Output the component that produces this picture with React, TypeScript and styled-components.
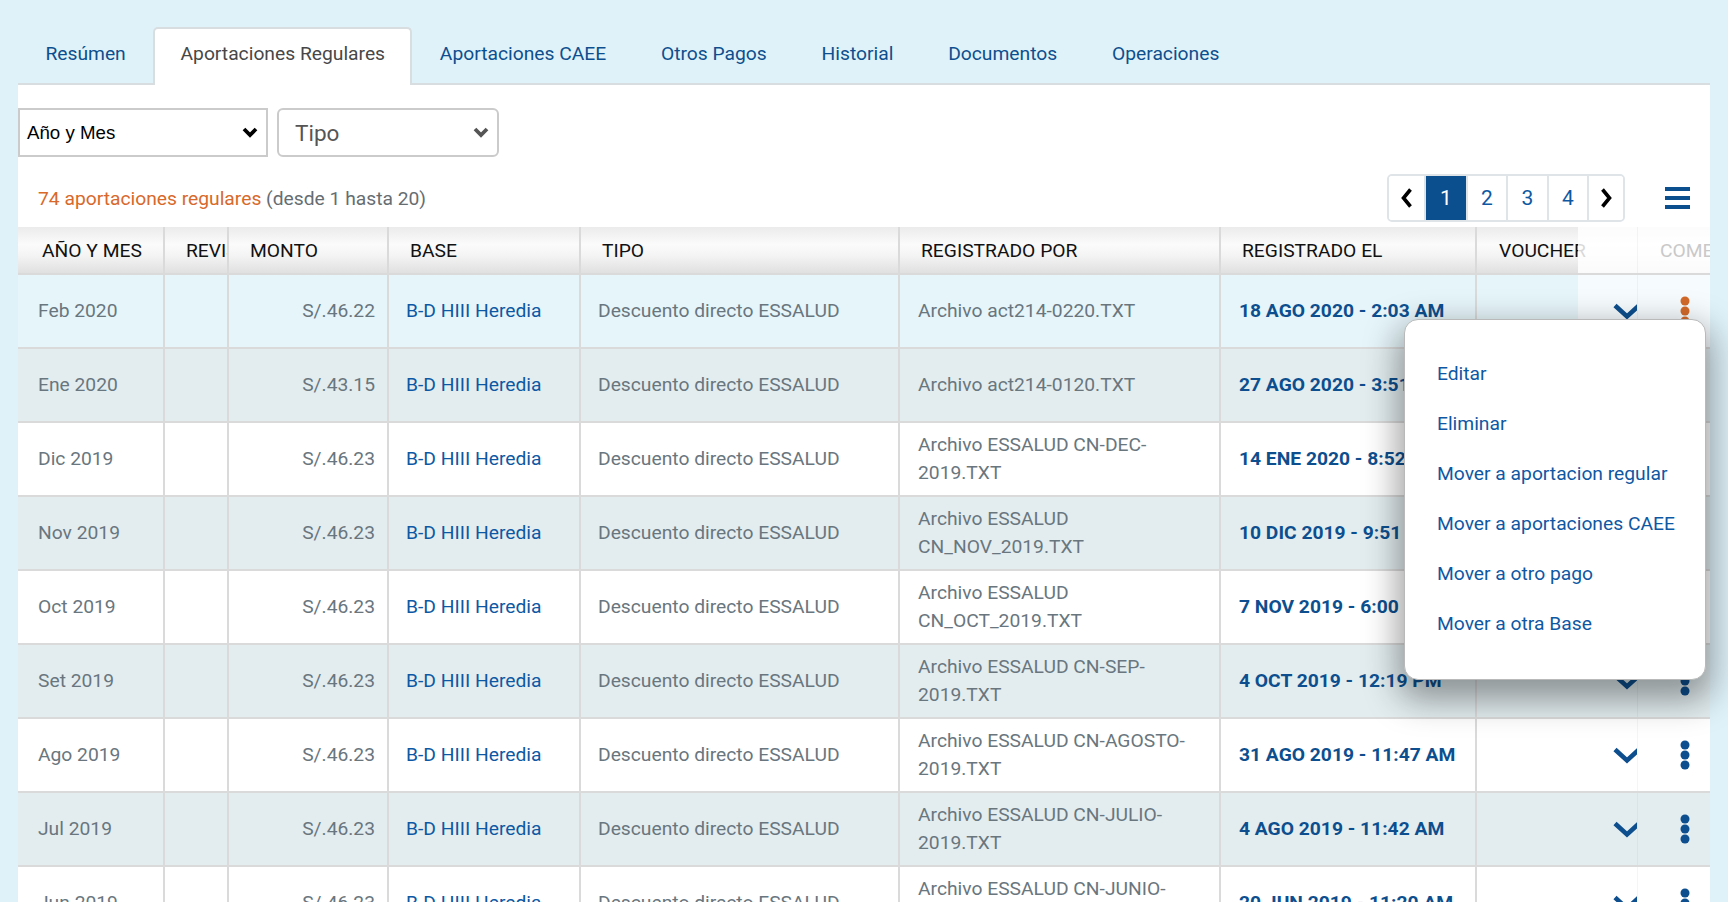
import React from "react";
import styled, { createGlobalStyle } from "styled-components";

const GlobalStyle = createGlobalStyle`
  html, body { margin: 0; padding: 0; }
  body {
    background: #dff2f9;
    font-family: Roboto, "Noto Sans", Arial, sans-serif;
    width: 1728px;
    height: 902px;
    overflow: hidden;
  }
  * { box-sizing: border-box; }
`;

const COLS = "147px 64px 160px 192px 319px 321px 256px 101px 59px 73px";
const BLUE = "#0d4f8e";
const LINK = "#0e58a3";
const GRAY = "#69767e";
const LINE = "#dadada";

const Page = styled.div`
  padding: 27px 18px 0 18px;
  height: 902px;
  overflow: hidden;
`;

const TabBar = styled.nav`
  display: flex;
  border-bottom: 2px solid #d8dde0;
`;

const Tab = styled.div<{ $active?: boolean }>`
  height: 58px;
  padding: 0 25.4px 8px 25.4px;
  display: flex;
  align-items: center;
  font-size: 19.25px;
  color: ${(p) => (p.$active ? "#474747" : BLUE)};
  background: ${(p) => (p.$active ? "#ffffff" : "transparent")};
  border: 2px solid ${(p) => (p.$active ? "#d8dde0" : "transparent")};
  border-bottom: none;
  border-radius: 5px 5px 0 0;
  margin-bottom: -2px;
`;

const Panel = styled.section`
  background: #ffffff;
`;

const FilterRow = styled.div`
  display: flex;
  gap: 9px;
  padding-top: 23px;
`;

const SelectBox = styled.div<{ $width: number; $rounded?: boolean }>`
  width: ${(p) => p.$width}px;
  height: 49px;
  border: 2px solid #cbcbcb;
  border-radius: ${(p) => (p.$rounded ? "6px" : "0")};
  display: flex;
  align-items: center;
  justify-content: space-between;
`;

const SelectLabel = styled.span<{ $variant: "sys" | "big" }>`
  font-family: ${(p) =>
    p.$variant === "sys" ? '"Liberation Sans", Arial, sans-serif' : 'Roboto, sans-serif'};
  font-size: ${(p) => (p.$variant === "sys" ? "18.7px" : "22.5px")};
  color: ${(p) => (p.$variant === "sys" ? "#000" : "#555")};
  padding-left: ${(p) => (p.$variant === "sys" ? "7px" : "16px")};
`;

const SelectArrow = styled.span`
  display: flex;
  padding-right: 8px;
`;

const Toolbar = styled.div`
  display: flex;
  align-items: center;
  justify-content: space-between;
  margin-top: 17px;
  margin-bottom: 5px;
  height: 48px;
  padding: 0 20px;
`;

const Count = styled.div`
  font-size: 19.25px;
  color: #666d72;
`;

const CountStrong = styled.span`
  color: #d8692b;
`;

const ToolRight = styled.div`
  display: flex;
  align-items: center;
  gap: 40px;
`;

const Pager = styled.div`
  display: flex;
  height: 48px;
  border: 2px solid #dfe4e8;
  border-radius: 5px;
  overflow: hidden;
`;

const PageItem = styled.div<{ $active?: boolean; $w: number; $last?: boolean }>`
  width: ${(p) => p.$w}px;
  display: flex;
  align-items: center;
  justify-content: center;
  font-size: 21px;
  color: ${(p) => (p.$active ? "#ffffff" : LINK)};
  background: ${(p) => (p.$active ? "#0b4f8f" : "#ffffff")};
  border-right: ${(p) => (p.$last ? "none" : "2px solid #dfe4e8")};
`;

const Burger = styled.div`
  display: flex;
  width: 25px;
`;

const TableWrap = styled.div`
  position: relative;
`;

const HeadRow = styled.div`
  display: grid;
  grid-template-columns: ${COLS};
  height: 48px;
  background: linear-gradient(#ebebeb 0%, #fbfbfb 38%, #f4f4f4 62%, #e0e0e0 100%);
  border-bottom: 2px solid ${LINE};
`;

const HeadCell = styled.div<{ $divider?: boolean; $pad?: number; $visible?: boolean }>`
  display: flex;
  align-items: center;
  padding-left: ${(p) => p.$pad ?? 21}px;
  font-size: 19.25px;
  color: #111;
  white-space: nowrap;
  overflow: ${(p) => (p.$visible ? "visible" : "hidden")};
  border-right: ${(p) => (p.$divider ? `2px solid ${LINE}` : "none")};
`;

const StickyHead = styled.div<{ $edge?: boolean }>`
  position: relative;
  z-index: 1;
  display: flex;
  align-items: center;
  padding-left: 22px;
  overflow: hidden;
  white-space: nowrap;
  font-size: 19.25px;
  color: #c9c9c9;
  background: rgba(255, 255, 255, 0.84);
  border-left: ${(p) => (p.$edge ? "1px solid rgba(0,0,0,0.04)" : "none")};
`;

const Row = styled.div<{ $bg: string }>`
  display: grid;
  grid-template-columns: ${COLS};
  height: 74px;
  background: ${(p) => p.$bg};
  border-bottom: 2px solid ${LINE};
`;

const Cell = styled.div<{
  $divider?: boolean;
  $right?: boolean;
  $pad?: number;
  $tone?: "gray" | "link" | "date";
}>`
  display: flex;
  flex-direction: column;
  justify-content: center;
  align-items: ${(p) => (p.$right ? "flex-end" : "flex-start")};
  padding: ${(p) => (p.$right ? "0 12px 0 0" : `0 0 0 ${p.$pad ?? 17}px`)};
  font-size: 19.25px;
  line-height: 28px;
  white-space: nowrap;
  overflow: hidden;
  font-weight: ${(p) => (p.$tone === "date" ? 700 : 400)};
  color: ${(p) => (p.$tone === "link" ? LINK : p.$tone === "date" ? BLUE : GRAY)};
  border-right: ${(p) => (p.$divider ? `2px solid ${LINE}` : "none")};
`;

const ActionCell = styled.div<{ $bg: string; $edge?: boolean; $end?: boolean }>`
  position: relative;
  z-index: 1;
  display: flex;
  align-items: center;
  justify-content: ${(p) => (p.$end ? "flex-end" : "flex-start")};
  padding-left: ${(p) => (p.$end ? "0" : "42px")};
  background: ${(p) => p.$bg};
  border-left: ${(p) => (p.$edge ? "1px solid rgba(0,0,0,0.04)" : "none")};
`;

const ChevronWrap = styled.span`
  display: flex;
  margin-right: -5px;
`;

const Menu = styled.div`
  position: absolute;
  z-index: 5;
  top: 92px;
  right: 4px;
  width: 302px;
  height: 361px;
  background: #ffffff;
  border-radius: 14px;
  border: 1px solid #b9b9b9;
  box-shadow: 0 14px 34px 6px rgba(0, 0, 0, 0.38);
  padding-top: 28px;
  display: flex;
  flex-direction: column;
`;

const MenuItem = styled.div`
  height: 50px;
  display: flex;
  align-items: center;
  padding-left: 32px;
  font-size: 19.25px;
  color: ${LINK};
  white-space: nowrap;
`;

const SmallChevron = ({ color }: { color: string }) => (
  <svg width="16" height="11" viewBox="0 0 16 11">
    <polyline points="2,2 8,8 14,2" fill="none" stroke={color} strokeWidth="3.8" />
  </svg>
);

const RowChevron = () => (
  <svg width="30" height="19" viewBox="0 0 30 19">
    <polyline points="3,3.5 15,14.5 27,3.5" fill="none" stroke={BLUE} strokeWidth="4.6" />
  </svg>
);

const Kebab = ({ color }: { color: string }) => (
  <svg width="10" height="30" viewBox="0 0 10 30">
    <circle cx="5" cy="5" r="4.5" fill={color} />
    <circle cx="5" cy="15" r="4.5" fill={color} />
    <circle cx="5" cy="25" r="4.5" fill={color} />
  </svg>
);

const PagerArrow = ({ dir }: { dir: "l" | "r" }) => (
  <svg width="14" height="22" viewBox="0 0 14 22">
    <polyline
      points={dir === "l" ? "10.5,2.5 3.5,11 10.5,19.5" : "3.5,2.5 10.5,11 3.5,19.5"}
      fill="none"
      stroke="#000"
      strokeWidth="3.6"
    />
  </svg>
);

const BurgerIcon = () => (
  <svg width="25" height="22" viewBox="0 0 25 22">
    <rect x="0" y="0" width="25" height="4" fill="#0b4f8f" />
    <rect x="0" y="9" width="25" height="4" fill="#0b4f8f" />
    <rect x="0" y="18" width="25" height="4" fill="#0b4f8f" />
  </svg>
);

type Aporte = {
  mes: string;
  monto: string;
  archivo: string[];
  fecha: string;
};

const rows: Aporte[] = [
  { mes: "Feb 2020", monto: "S/.46.22", archivo: ["Archivo act214-0220.TXT"], fecha: "18 AGO 2020 - 2:03 AM" },
  { mes: "Ene 2020", monto: "S/.43.15", archivo: ["Archivo act214-0120.TXT"], fecha: "27 AGO 2020 - 3:51 AM" },
  { mes: "Dic 2019", monto: "S/.46.23", archivo: ["Archivo ESSALUD CN-DEC-", "2019.TXT"], fecha: "14 ENE 2020 - 8:52 AM" },
  { mes: "Nov 2019", monto: "S/.46.23", archivo: ["Archivo ESSALUD", "CN_NOV_2019.TXT"], fecha: "10 DIC 2019 - 9:51 AM" },
  { mes: "Oct 2019", monto: "S/.46.23", archivo: ["Archivo ESSALUD", "CN_OCT_2019.TXT"], fecha: "7 NOV 2019 - 6:00 PM" },
  { mes: "Set 2019", monto: "S/.46.23", archivo: ["Archivo ESSALUD CN-SEP-", "2019.TXT"], fecha: "4 OCT 2019 - 12:19 PM" },
  { mes: "Ago 2019", monto: "S/.46.23", archivo: ["Archivo ESSALUD CN-AGOSTO-", "2019.TXT"], fecha: "31 AGO 2019 - 11:47 AM" },
  { mes: "Jul 2019", monto: "S/.46.23", archivo: ["Archivo ESSALUD CN-JULIO-", "2019.TXT"], fecha: "4 AGO 2019 - 11:42 AM" },
  { mes: "Jun 2019", monto: "S/.46.23", archivo: ["Archivo ESSALUD CN-JUNIO-", "2019.TXT"], fecha: "20 JUN 2019 - 11:20 AM" },
];

const tabs = [
  "Resúmen",
  "Aportaciones Regulares",
  "Aportaciones CAEE",
  "Otros Pagos",
  "Historial",
  "Documentos",
  "Operaciones",
];

const menuItems = [
  "Editar",
  "Eliminar",
  "Mover a aportacion regular",
  "Mover a aportaciones CAEE",
  "Mover a otro pago",
  "Mover a otra Base",
];

export default function App() {
  return (
    <>
      <GlobalStyle />
      <Page>
        <TabBar>
          {tabs.map((t, i) => (
            <Tab key={t} $active={i === 1}>
              {t}
            </Tab>
          ))}
        </TabBar>
        <Panel>
          <FilterRow>
            <SelectBox $width={250}>
              <SelectLabel $variant="sys">Año y Mes</SelectLabel>
              <SelectArrow>
                <SmallChevron color="#000" />
              </SelectArrow>
            </SelectBox>
            <SelectBox $width={222} $rounded>
              <SelectLabel $variant="big">Tipo</SelectLabel>
              <SelectArrow>
                <SmallChevron color="#555" />
              </SelectArrow>
            </SelectBox>
          </FilterRow>

          <Toolbar>
            <Count>
              <CountStrong>74 aportaciones regulares</CountStrong> (desde 1 hasta 20)
            </Count>
            <ToolRight>
              <Pager>
                <PageItem $w={37}>
                  <PagerArrow dir="l" />
                </PageItem>
                <PageItem $w={42} $active>
                  1
                </PageItem>
                <PageItem $w={40}>2</PageItem>
                <PageItem $w={41}>3</PageItem>
                <PageItem $w={40}>4</PageItem>
                <PageItem $w={34} $last>
                  <PagerArrow dir="r" />
                </PageItem>
              </Pager>
              <Burger>
                <BurgerIcon />
              </Burger>
            </ToolRight>
          </Toolbar>

          <TableWrap>
            <HeadRow>
              <HeadCell $divider $pad={24}>AÑO Y MES</HeadCell>
              <HeadCell $divider>REVISADO</HeadCell>
              <HeadCell $divider>MONTO</HeadCell>
              <HeadCell $divider>BASE</HeadCell>
              <HeadCell $divider>TIPO</HeadCell>
              <HeadCell $divider>REGISTRADO POR</HeadCell>
              <HeadCell $divider>REGISTRADO EL</HeadCell>
              <HeadCell $visible $pad={22}>VOUCHER</HeadCell>
              <StickyHead />
              <StickyHead $edge>COMENTARIO</StickyHead>
            </HeadRow>

            {rows.map((r, i) => {
              const stripe = i % 2 === 1 ? "#e3edf0" : "#ffffff";
              const bg = i === 0 ? "#e6f5fa" : stripe;
              const actionBg = i === 0 ? "#f6fbfd" : stripe;
              return (
                <Row key={r.mes} $bg={bg}>
                  <Cell $divider $pad={20}>{r.mes}</Cell>
                  <Cell $divider />
                  <Cell $divider $right>{r.monto}</Cell>
                  <Cell $divider $tone="link">B-D HIII Heredia</Cell>
                  <Cell $divider>Descuento directo ESSALUD</Cell>
                  <Cell $divider $pad={18}>
                    {r.archivo.map((l) => (
                      <span key={l}>{l}</span>
                    ))}
                  </Cell>
                  <Cell $divider $pad={18} $tone="date">
                    {r.fecha}
                  </Cell>
                  <Cell />
                  <ActionCell $bg={actionBg} $end>
                    <ChevronWrap>
                      <RowChevron />
                    </ChevronWrap>
                  </ActionCell>
                  <ActionCell $bg={actionBg} $edge>
                    <Kebab color={i === 0 ? "#d2692a" : BLUE} />
                  </ActionCell>
                </Row>
              );
            })}

            <Menu>
              {menuItems.map((m) => (
                <MenuItem key={m}>{m}</MenuItem>
              ))}
            </Menu>
          </TableWrap>
        </Panel>
      </Page>
    </>
  );
}
